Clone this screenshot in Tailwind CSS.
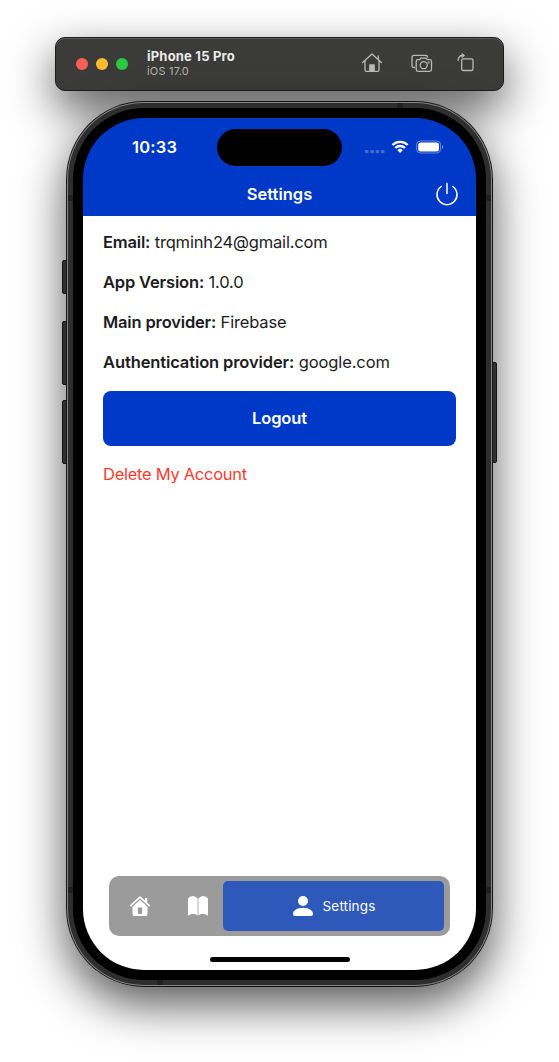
<!DOCTYPE html>
<html lang="en">
<head>
<meta charset="utf-8">
<title>iPhone 15 Pro</title>
<script src="https://cdn.jsdelivr.net/npm/@tailwindcss/browser@4"></script>
</head>
<body class="bg-white">
<div class="relative h-[1062px] w-[559px] overflow-hidden bg-white pt-[37px] font-['Inter',sans-serif]">
  <!-- simulator toolbar -->
  <header class="ml-[55px] flex h-[54px] w-[449px] items-center rounded-[10px] border border-[#1c1c1c] bg-[#3b3b39] pb-[2px] pl-5 shadow-[0_18px_46px_rgba(0,0,0,0.66),inset_0_1px_0_#5c5c5c]">
    <div class="mt-[2px] flex gap-2">
      <span class="size-3 rounded-full bg-[#ff5f57]"></span>
      <span class="size-3 rounded-full bg-[#febc2e]"></span>
      <span class="size-3 rounded-full bg-[#28c840]"></span>
    </div>
    <div class="ml-[19px] w-[214px] whitespace-nowrap">
      <div class="text-[13px] leading-[15px] font-bold tracking-[0.2px] text-[#ececec]">iPhone 15 Pro</div>
      <div class="text-[11px] leading-[14px] tracking-[0.2px] text-[#b4b4b2]">iOS 17.0</div>
    </div>
    <svg class="h-[22px] w-[22px]" viewBox="0 0 22 22" fill="none" stroke="#b9b9b7" stroke-width="1.3" stroke-linecap="round" stroke-linejoin="round"><path d="M1.600 10.500 11 2l9.400 8.500M4 8.800V18q0 1.300 1.300 1.300h11.400q1.300 0 1.300-1.300V8.800M17.300 7.200V4"/><path d="M8.800 19v-6h4.400v6z" fill="#b9b9b7"/></svg>
    <svg class="ml-[27px] h-[22px] w-[24px]" viewBox="0 0 24 22" fill="none" stroke="#b9b9b7" stroke-width="1.300" stroke-linecap="round" stroke-linejoin="round"><path d="M4.500 15.500H4q-2 0-2-2V5.300q0-2 2-2h11.500q2 0 2 1.700"/><path d="M8 7.700h1.800l1-1.600h5.400l1 1.600h2.500q1.800 0 1.800 1.800v8q0 1.800-1.800 1.800H8q-1.800 0-1.800-1.800v-8q0-1.800 1.800-1.800Z"/><circle cx="13.700" cy="13.200" r="3.500"/><circle cx="18.600" cy="10.600" r=".4"/></svg>
    <svg class="ml-[22px] h-[22px] w-[20px]" viewBox="0 0 20 22" fill="none" stroke="#b9b9b7" stroke-width="1.300" stroke-linecap="round" stroke-linejoin="round"><rect x="5.700" y="6.800" width="11.300" height="11.700" rx="1.500"/><path d="M2.200 8.500C2.200 5 3.800 3.500 7 3.500"/><path d="m6.300 1.700 2.400 1.800-2.400 1.800Z" fill="#b9b9b7" stroke-width=".8"/></svg>
  </header>

  <!-- device -->
  <div class="relative mt-[10px] ml-[66px] h-[886px] w-[427px] rounded-[78px] shadow-[0_18px_46px_rgba(0,0,0,0.66)]">
    <span class="absolute top-[159px] -left-[4px] h-[34px] w-[8px] rounded-[2px] border border-[#151515] bg-[#303030]"></span>
    <span class="absolute top-[220px] -left-[4px] h-[64px] w-[8px] rounded-[2px] border border-[#151515] bg-[#303030]"></span>
    <span class="absolute top-[299px] -left-[4px] h-[64px] w-[8px] rounded-[2px] border border-[#151515] bg-[#303030]"></span>
    <span class="absolute top-[261px] -right-[4px] h-[101px] w-[8px] rounded-[2px] border border-[#151515] bg-[#303030]"></span>
    <div class="relative size-full rounded-[78px] bg-[#151515] p-px">
      <div class="size-full rounded-[77px] bg-[#858585] p-px">
        <div class="relative size-full rounded-[76px] bg-[#2e2e2e] p-[5px]">
          <span class="absolute top-[92px] left-0 h-[6px] w-full bg-[#202020]"></span>
          <span class="absolute bottom-[92px] left-0 h-[6px] w-full bg-[#202020]"></span>
          <span class="absolute top-0 left-[329px] h-[6px] w-[6px] bg-[#202020]"></span>
          <span class="absolute bottom-0 left-[89px] h-[6px] w-[6px] bg-[#202020]"></span>
          <div class="relative size-full rounded-[71px] bg-black p-[10px]">
            <main class="flex h-[852px] w-[393px] flex-col overflow-hidden rounded-[61px] bg-linear-to-b from-[#0038c7] from-[98px] to-white to-[98px] text-[#1c1c1e]">
              <div class="h-[98px] shrink-0 text-white">
                <div class="flex h-[59px] items-start">
                  <div class="w-[134px] pt-[18px] pl-[49px] text-[16.500px] leading-[23px] font-semibold tracking-[0.2px]">10:33</div>
                  <div class="mt-[11px] h-[37px] w-[125px] rounded-full bg-black"></div>
                  <svg class="mt-[20px] ml-[22px] h-[18px] w-[80px]" viewBox="0 0 80 18"><g fill="#fff" fill-opacity=".25"><rect x="1" y="12" width="3.600" height="3.200" rx="1"/><rect x="6.300" y="12" width="3.600" height="3.200" rx="1"/><rect x="11.600" y="12" width="3.600" height="3.200" rx="1"/><rect x="16.900" y="12" width="3.600" height="3.200" rx="1"/></g><g fill="none" stroke="#fff" stroke-width="2.300"><path d="M28.500 7A10.800 10.800 0 0 1 43.700 7"/><path d="M31.300 10A6.800 6.800 0 0 1 40.900 10"/></g><path d="M33.400 12.200a3.800 3.800 0 0 1 5.400 0l-2.700 2.800Z" fill="#fff"/><rect x="52.600" y="3" width="24" height="12" rx="3.800" fill="none" stroke="#fff" stroke-opacity=".4"/><rect x="54.200" y="4.600" width="20.800" height="8.900" rx="2.500" fill="#fff"/><path d="M78 7v4.200q1.300-.6 1.300-2.100T78 7Z" fill="#fff" fill-opacity=".45"/></svg>
                </div>
                <div class="relative -mt-[5px] flex h-[44px] items-center justify-center">
                  <h1 class="text-[16.500px] font-semibold">Settings</h1>
                  <svg class="absolute top-[10px] right-[17px] size-[24px]" viewBox="0 0 24 24" fill="none" stroke="#fff" stroke-width="1.500" stroke-linecap="round"><path d="M12 1.500v10M6.200 4.500a10 10 0 1 0 11.600 0"/></svg>
                </div>
              </div>
              <div class="flex flex-col px-5 pt-[6px] text-[16.500px] whitespace-nowrap">
                <p class="h-10 leading-10 tracking-[-0.17px]"><b class="font-semibold">Email:</b> trqminh24@gmail.com</p>
                <p class="h-10 leading-10 tracking-[-0.16px]"><b class="font-semibold">App Version:</b> 1.0.0</p>
                <p class="h-10 leading-10 tracking-[-0.16px]"><b class="font-semibold">Main provider:</b> Firebase</p>
                <p class="h-10 leading-10 tracking-[-0.11px]"><b class="font-semibold">Authentication provider:</b> google.com</p>
                <button class="mt-[9px] h-[55px] rounded-lg bg-[#0038c7] font-semibold tracking-[-0.1px] text-white">Logout</button>
                <a class="mt-[8px] h-10 leading-10 tracking-[-0.28px] text-[#ff3b30]">Delete My Account</a>
              </div>
              <nav class="mt-auto ml-[26px] flex h-[60px] w-[341px] shrink-0 items-center rounded-[10px] bg-[#9b9b9b] p-[5px] pr-[6px] text-white">
                <div class="flex w-[52px] justify-center">
                  <svg class="size-[22px]" viewBox="0 0 22 22"><path d="M1.700 10.700 11 2.100l9.300 8.600" fill="none" stroke="#fff" stroke-width="1.600" stroke-linecap="round" stroke-linejoin="round"/><path d="M16 3h2.200v5.200L16 6.300Z" fill="#fff"/><path fill="#fff" fill-rule="evenodd" d="M11 5 18.500 11.800v7.200q0 2-2 2h-11q-2 0-2-2v-7.200ZM8.900 12.600v6.500h4.200v-6.500Z"/></svg>
                </div>
                <div class="flex w-[57px] justify-center pl-[6px]">
                  <svg class="h-[22px] w-[22px]" viewBox="0 0 22 22" fill="#fff"><path d="M10.600 20.500C8 18.600 3.500 18.600 1 20.900V3.600Q2.800 1.100 5.800 1.100T10.600 3.600ZM11.400 20.500C14 18.600 18.500 18.600 21 20.900V3.600Q19.200 1.100 16.200 1.100T11.400 3.600Z"/></svg>
                </div>
                <div class="flex h-[50px] flex-1 items-center justify-center gap-[9px] rounded-[5px] bg-[#2e58ba]">
                  <svg class="h-[22px] w-[22px]" viewBox="0 0 22 22" fill="#fff"><circle cx="11" cy="6" r="5"/><path d="M3 21Q1 21 1 18.800C1 15.800 5 12.800 11 12.800S21 15.800 21 18.800Q21 21 19 21Z"/></svg>
                  <span class="text-[13.500px] leading-[20px] tracking-[0.15px]">Settings</span>
                </div>
              </nav>
              <div class="mt-[21px] mb-[8px] ml-[126.500px] h-[5px] w-[140px] shrink-0 rounded-full bg-black"></div>
            </main>
          </div>
        </div>
      </div>
    </div>
  </div>
</div>
</body>
</html>
